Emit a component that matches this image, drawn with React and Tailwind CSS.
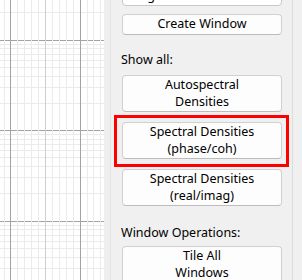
import React from 'react';

// log-scale grid drawn on the plot canvas
function PlotGrid() {
  const vLines = [];
  for (let i = 0; i < 15; i++) {
    const x = 3.5 + i * 6.92;
    let color = '#ebebeb';
    if (i === 1 || i === 11) color = '#a3a3a3';
    else if (i === 6) color = '#cfcfcf';
    vLines.push({ x, color });
  }

  const hLines = [];
  const majors = [-51, 39.5, 130, 220.5];
  majors.forEach((top) => {
    hLines.push({ y: top, color: '#a3a3a3' });
    for (let k = 9; k >= 2; k--) {
      const y = top + 90.5 * (1 - Math.log10(k));
      hLines.push({ y, color: '#ebebeb' });
    }
  });

  return (
    <svg width="104" height="280" className="block">
      {hLines.map((l, i) => (
        <line key={'h' + i} x1="0" x2="104" y1={Math.round(l.y) + 0.5} y2={Math.round(l.y) + 0.5} stroke={l.color} strokeWidth="1" />
      ))}
      {vLines.map((l, i) => (
        <line key={'v' + i} x1={Math.round(l.x) + 0.5} x2={Math.round(l.x) + 0.5} y1="0" y2="280" stroke={l.color} strokeWidth="1" />
      ))}
    </svg>
  );
}

function PanelButton({ children, tall }) {
  return (
    <button
      className={
        'w-[160px] flex flex-col items-center justify-center rounded-[4px] border border-[#d0d0d0] border-b-[#bcbcbc] bg-[#fdfdfd] text-[12.5px] leading-[16.5px] text-black ' +
        (tall ? 'h-[37px]' : 'h-[21px]')
      }
    >
      {children}
    </button>
  );
}

export default function App() {
  return (
    <div className="flex w-[302px] h-[280px] overflow-hidden bg-[#f0f0f0]" style={{ fontFamily: '"Noto Sans", "Open Sans", sans-serif' }}>
      <div className="w-[104px] h-full bg-white">
        <PlotGrid />
      </div>
      <div className="w-[7px] h-full bg-[#efefef] border-r border-[#e4e4e4]"></div>

      <div className="w-[181px] h-full flex flex-col pl-[11px] pr-[10px]">
        <div className="-mt-[15px] w-[160px] h-[21px] rounded-[4px] border border-[#c8c8c8] bg-white px-[6px] text-[12.5px] leading-[19px] text-black">
          Magnitude
        </div>

        <div className="mt-[8px]">
          <PanelButton>Create Window</PanelButton>
        </div>

        <div className="mt-[8px] -ml-[2px] w-[163px] h-px bg-[#a8a8a8]"></div>

        <div className="mt-[9px] -ml-[1px] text-[12.5px] leading-[16px] text-black">Show all:</div>

        <div className="mt-[7px]">
          <PanelButton tall>
            <span>Autospectral</span>
            <span>Densities</span>
          </PanelButton>
        </div>

        <div className="mt-[10px] relative">
          <PanelButton tall>
            <span>Spectral Densities</span>
            <span>(phase/coh)</span>
          </PanelButton>
          <div className="absolute -left-[8px] -top-[7px] w-[175px] h-[52px] border-[3px] border-[#ff0000] pointer-events-none"></div>
        </div>

        <div className="mt-[10px]">
          <PanelButton tall>
            <span>Spectral Densities</span>
            <span>(real/imag)</span>
          </PanelButton>
        </div>

        <div className="mt-[8px] -ml-[2px] w-[163px] h-px bg-[#a8a8a8]"></div>

        <div className="mt-[11px] -ml-[1px] text-[12.5px] leading-[16px] text-black">Window Operations:</div>

        <div className="mt-[5px]">
          <PanelButton tall>
            <span>Tile All</span>
            <span>Windows</span>
          </PanelButton>
        </div>
      </div>

      <div className="w-[10px] h-full bg-[#f0f0f0] border-l border-[#dcdcdc]"></div>
    </div>
  );
}
